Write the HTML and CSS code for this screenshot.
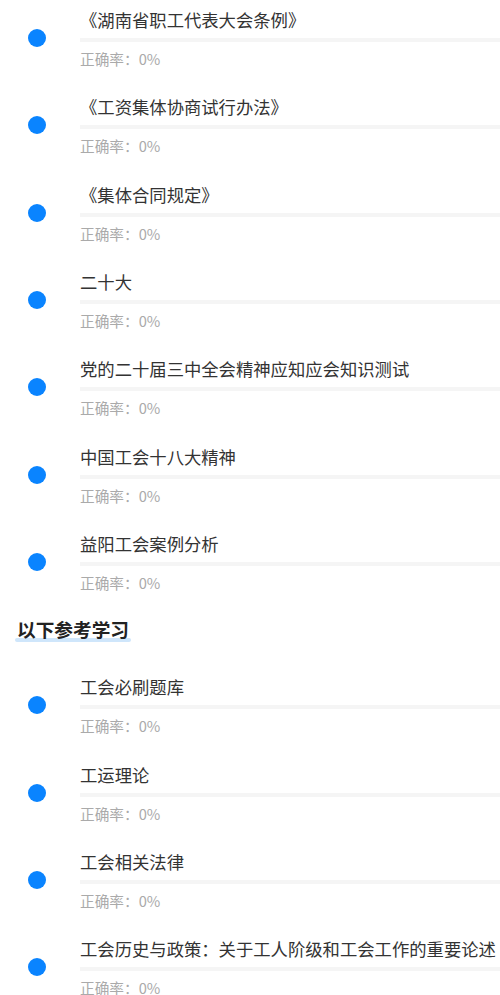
FILE: index.html
```html
<!DOCTYPE html>
<html lang="zh-CN">
<head>
    <meta charset="UTF-8">
    <meta name="viewport" content="width=device-width, initial-scale=1.0">
    <title>答题列表</title>
    <link rel="stylesheet" href="styles.css">
</head>
<body>
    <div class="page">
        <div class="list">
            <div class="item">
                <div class="dot"></div>
                <div class="info">
                    <div class="name">《湖南省职工代表大会条例》</div>
                    <div class="bar"></div>
                    <div class="rate">正确率：0%</div>
                </div>
            </div>
            <div class="item">
                <div class="dot"></div>
                <div class="info">
                    <div class="name">《工资集体协商试行办法》</div>
                    <div class="bar"></div>
                    <div class="rate">正确率：0%</div>
                </div>
            </div>
            <div class="item">
                <div class="dot"></div>
                <div class="info">
                    <div class="name">《集体合同规定》</div>
                    <div class="bar"></div>
                    <div class="rate">正确率：0%</div>
                </div>
            </div>
            <div class="item">
                <div class="dot"></div>
                <div class="info">
                    <div class="name">二十大</div>
                    <div class="bar"></div>
                    <div class="rate">正确率：0%</div>
                </div>
            </div>
            <div class="item">
                <div class="dot"></div>
                <div class="info">
                    <div class="name">党的二十届三中全会精神应知应会知识测试</div>
                    <div class="bar"></div>
                    <div class="rate">正确率：0%</div>
                </div>
            </div>
            <div class="item">
                <div class="dot"></div>
                <div class="info">
                    <div class="name">中国工会十八大精神</div>
                    <div class="bar"></div>
                    <div class="rate">正确率：0%</div>
                </div>
            </div>
            <div class="item">
                <div class="dot"></div>
                <div class="info">
                    <div class="name">益阳工会案例分析</div>
                    <div class="bar"></div>
                    <div class="rate">正确率：0%</div>
                </div>
            </div>
        </div>

        <div class="section">
            <span class="section-title">以下参考学习</span>
        </div>

        <div class="list">
            <div class="item">
                <div class="dot"></div>
                <div class="info">
                    <div class="name">工会必刷题库</div>
                    <div class="bar"></div>
                    <div class="rate">正确率：0%</div>
                </div>
            </div>
            <div class="item">
                <div class="dot"></div>
                <div class="info">
                    <div class="name">工运理论</div>
                    <div class="bar"></div>
                    <div class="rate">正确率：0%</div>
                </div>
            </div>
            <div class="item">
                <div class="dot"></div>
                <div class="info">
                    <div class="name">工会相关法律</div>
                    <div class="bar"></div>
                    <div class="rate">正确率：0%</div>
                </div>
            </div>
            <div class="item">
                <div class="dot"></div>
                <div class="info">
                    <div class="name">工会历史与政策：关于工人阶级和工会工作的重要论述</div>
                    <div class="bar"></div>
                    <div class="rate">正确率：0%</div>
                </div>
            </div>
        </div>
    </div>
</body>
</html>
```

FILE: styles.css
```css
body {
    font-family: "Noto Sans CJK SC", "Noto Sans", sans-serif;
    margin: 0;
    background: #fff;
    overflow: hidden;
}
.page {
    width: 500px;
}
.item {
    display: flex;
    height: 87.33px;
    box-sizing: border-box;
    padding-top: 8px;
}
.dot {
    width: 18px;
    height: 18px;
    border-radius: 50%;
    background: #0a84ff;
    margin: 21px 0 0 28px;
    flex-shrink: 0;
}
.info {
    flex: 1;
    margin-left: 34px;
    min-width: 0;
}
.name {
    font-size: 17.33px;
    line-height: 24px;
    color: #333;
    white-space: nowrap;
}
.bar {
    height: 4px;
    margin-top: 6px;
    background: #f5f5f5;
}
.rate {
    font-size: 14.67px;
    line-height: 20px;
    margin-top: 7px;
    color: #aaa;
}
.section {
    height: 56.2px;
    box-sizing: border-box;
    padding: 5px 0 0 17px;
}
.section-title {
    position: relative;
    z-index: 0;
    display: inline-block;
    font-size: 18.67px;
    line-height: 26px;
    font-weight: bold;
    color: #222;
}
.section-title::after {
    content: "";
    position: absolute;
    left: -2px;
    right: -2px;
    bottom: 0;
    height: 4px;
    border-radius: 2px;
    background: #cfe6fb;
    z-index: -1;
}
```
